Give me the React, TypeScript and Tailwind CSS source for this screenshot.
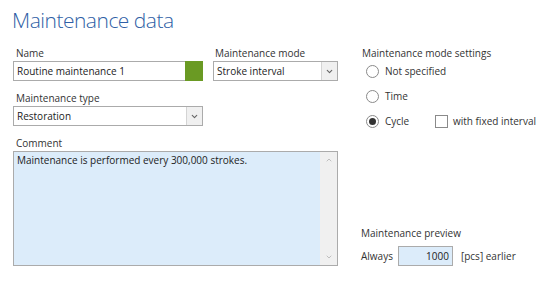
import { ChevronDown, ChevronUp } from 'lucide-react';

const font = "font-['Open_Sans','Noto_Sans',sans-serif]";

function Label({ children }: { children: React.ReactNode }) {
    return <div className="h-[14px] pl-[3px] text-[10px] leading-[14px] text-[#333]">{children}</div>;
}

function Select({ value, width }: { value: string; width: string }) {
    return (
        <div className={`${width} mt-[1px] flex h-[20px] border border-[#ababab] bg-white`}>
            <div className="flex-1 pl-[3px] text-[10px] leading-[18px] text-[#222]">{value}</div>
            <div className="flex w-[16px] items-center justify-center border-l border-[#d4d4d4] bg-[#f0f0f0]">
                <ChevronDown className="h-[9px] w-[9px] text-[#666]" strokeWidth={3} />
            </div>
        </div>
    );
}

function Radio({ label, checked = false }: { label: string; checked?: boolean }) {
    return (
        <div className="flex h-[13px] items-center gap-[6px]">
            <span className="flex h-[13px] w-[13px] items-center justify-center rounded-full border border-[#8a8a8a] bg-white">
                {checked && <span className="h-[7px] w-[7px] rounded-full bg-[#333]" />}
            </span>
            <span className="text-[10px] leading-[13px] text-[#333]">{label}</span>
        </div>
    );
}

export default function App() {
    return (
        <div className={`${font} relative h-[292px] w-[546px] overflow-hidden bg-white`}>
            <h1 className="pl-[12px] pt-[4px] text-[21px] font-light leading-[32px] tracking-[-0.5px] text-[#2f5fa6]">
                Maintenance data
            </h1>

            <div className="mt-[10px] flex">
                {/* Left side */}
                <div className="ml-[13px] w-[325px]">
                    <div className="flex gap-[10px]">
                        <div>
                            <Label>Name</Label>
                            <div className="mt-[1px] flex h-[20px] w-[190px] border border-[#ababab] bg-white">
                                <div className="flex-1 pl-[3px] text-[10px] leading-[18px] text-[#222]">Routine maintenance 1</div>
                                <div className="-my-px -mr-px w-[18px] bg-[#6a9a23]" />
                            </div>
                        </div>
                        <div>
                            <div className="h-[14px] pl-[2px] text-[10px] leading-[14px] text-[#333]">Maintenance mode</div>
                            <Select value="Stroke interval" width="w-[125px]" />
                        </div>
                    </div>

                    <div className="mt-[10px]">
                        <Label>Maintenance type</Label>
                        <Select value="Restoration" width="w-[190px]" />
                    </div>

                    <div className="mt-[10px]">
                        <Label>Comment</Label>
                        <div className="mt-[1px] flex h-[115px] w-[325px] border border-[#ababab] bg-[#dcecfa]">
                            <div className="flex-1 pl-[3px] pt-[1px] text-[10px] leading-[14px] text-[#222]">
                                Maintenance is performed every 300,000 strokes.
                            </div>
                            <div className="flex w-[17px] flex-col items-center justify-between bg-[#f0f0f0] py-[4px]">
                                <ChevronUp className="h-[8px] w-[8px] text-[#b5b5b5]" strokeWidth={2.5} />
                                <ChevronDown className="h-[8px] w-[8px] text-[#b5b5b5]" strokeWidth={2.5} />
                            </div>
                        </div>
                    </div>
                </div>

                {/* Right side */}
                <div className="ml-[23px] flex flex-col">
                    <div className="h-[14px] pl-[1px] text-[10px] leading-[14px] text-[#333]">Maintenance mode settings</div>
                    <div className="ml-[5px] mt-[5px] flex flex-col gap-[12px]">
                        <Radio label="Not specified" />
                        <Radio label="Time" />
                        <div className="flex items-center">
                            <div className="w-[69px]">
                                <Radio label="Cycle" checked />
                            </div>
                            <span className="h-[13px] w-[13px] border border-[#8a8a8a] bg-white" />
                            <span className="ml-[5px] text-[10px] leading-[13px] text-[#333]">with fixed interval</span>
                        </div>
                    </div>

                    <div className="mt-auto">
                        <div className="h-[14px] text-[10px] leading-[14px] text-[#333]">Maintenance preview</div>
                        <div className="mt-[6px] flex items-center">
                            <span className="text-[10px] text-[#333]">Always</span>
                            <div className="ml-[5px] h-[20px] w-[55px] border border-[#ababab] bg-[#dcecfa] pr-[3px] text-right text-[10px] leading-[18px] text-[#222]">
                                1000
                            </div>
                            <span className="ml-[8px] text-[10px] text-[#333]">[pcs] earlier</span>
                        </div>
                    </div>
                </div>
            </div>
        </div>
    );
}
